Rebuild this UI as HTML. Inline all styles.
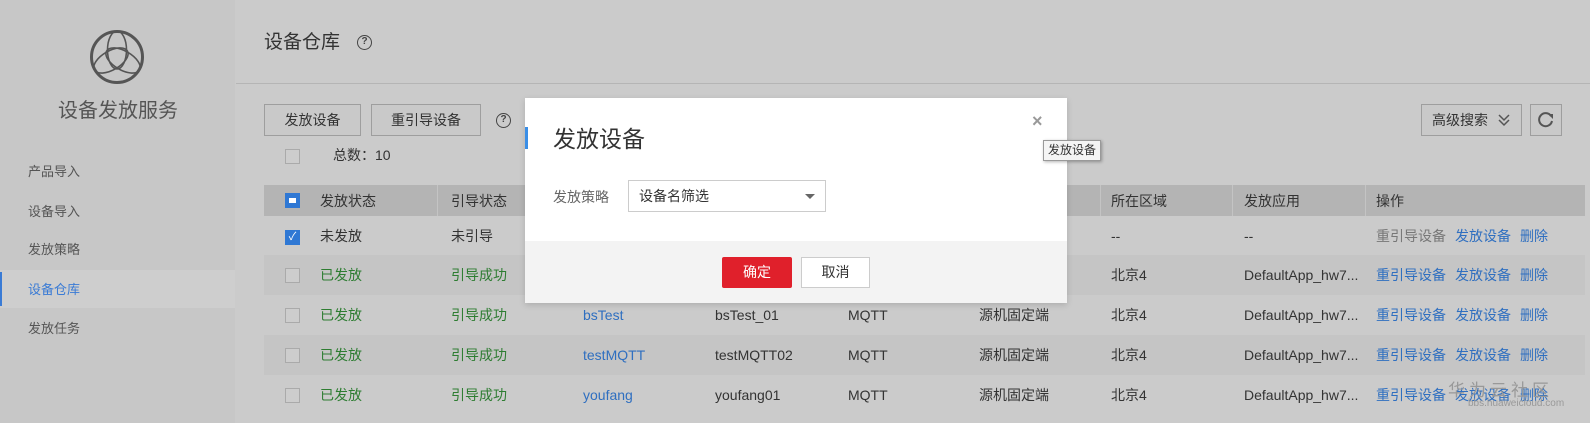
<!DOCTYPE html>
<html><head><meta charset="utf-8"><style>
*{margin:0;padding:0;box-sizing:border-box}
body{width:1590px;height:423px;overflow:hidden;background:#cbcbcb;font-family:"Liberation Sans","Noto Sans CJK SC",sans-serif;font-size:14px;color:#333;position:relative}
.abs{position:absolute}
.side{left:0;top:0;width:235px;height:423px;background:#c7c7c7}
.nav{left:28px;font-size:13px;color:#555;line-height:16px}
.btn{border:1px solid #9e9e9e;background:#c9c9c9;text-align:center;line-height:30px;font-size:14px;color:#333}
.cb{width:15px;height:15px;border:1px solid #aaa;background:#cdcdcd}
.row{left:264px;width:1321px;height:40px}
.t{position:absolute;font-size:14px;white-space:nowrap;line-height:16px}
.g{color:#2e7d32}.b{color:#2f6fc0}.gr{color:#777}
</style></head><body>
<div class="abs side"></div>
<svg class="abs" style="left:88px;top:28px" width="60" height="60" viewBox="88 28 60 60">
<g fill="none" stroke="#555" stroke-width="1.6">
<circle cx="117" cy="57" r="25.5" stroke-width="3"/>
<ellipse cx="117" cy="50" rx="9.5" ry="19"/>
<ellipse cx="117" cy="50" rx="9.5" ry="19" transform="rotate(120 117 57)"/>
<ellipse cx="117" cy="50" rx="9.5" ry="19" transform="rotate(240 117 57)"/>
</g></svg>
<div class="abs" style="left:58px;top:94px;font-size:20px;color:#555">设备发放服务</div>
<div class="abs nav" style="top:164px">产品导入</div>
<div class="abs nav" style="top:204px">设备导入</div>
<div class="abs nav" style="top:242px">发放策略</div>
<div class="abs" style="left:0;top:270px;width:235px;height:38px;background:#cecece"></div>
<div class="abs" style="left:0;top:272px;width:2px;height:34px;background:#3a7bd5"></div>
<div class="abs nav" style="top:282px;color:#3a7bd5">设备仓库</div>
<div class="abs nav" style="top:321px">发放任务</div>

<div class="abs" style="left:264px;top:31px;font-size:19px;color:#333;line-height:24px">设备仓库</div>
<div class="abs" style="left:357px;top:35px;width:15px;height:15px;border:1.5px solid #444;border-radius:50%;font-size:10px;line-height:12px;text-align:center;font-weight:bold;color:#444">?</div>
<div class="abs" style="left:236px;top:83px;width:1354px;height:1px;background:#b5b5b5"></div>

<div class="abs btn" style="left:264px;top:104px;width:97px;height:32px">发放设备</div>
<div class="abs btn" style="left:371px;top:104px;width:110px;height:32px">重引导设备</div>
<div class="abs" style="left:496px;top:113px;width:15px;height:15px;border:1.5px solid #444;border-radius:50%;font-size:10px;line-height:12px;text-align:center;font-weight:bold;color:#444">?</div>
<div class="abs btn" style="left:1421px;top:104px;width:101px;height:32px;text-align:left;padding-left:10px">高级搜索</div>
<svg class="abs" style="left:1497px;top:112px" width="14" height="16"><path d="M2 3 L7 8 L12 3 M2 8 L7 13 L12 8" fill="none" stroke="#555" stroke-width="1.5"/></svg>
<div class="abs btn" style="left:1530px;top:104px;width:32px;height:32px"></div>
<svg class="abs" style="left:1537px;top:111px" width="18" height="18" viewBox="0 0 18 18"><path d="M14 5 A6.5 6.5 0 1 0 15 10" fill="none" stroke="#555" stroke-width="2"/><path d="M11 3 L16 3 L16 8 Z" fill="#555"/></svg>
<div class="abs cb" style="left:285px;top:149px"></div>
<div class="abs" style="left:333px;top:147px;line-height:16px">总数：10</div>

<div class="abs" style="left:264px;top:185px;width:1321px;height:31px;background:#b4b4b4"></div>
<div class="abs" style="left:285px;top:193px;width:15px;height:15px;background:#2f78d4"><div style="margin:5px 4px;width:7px;height:5px;background:#fff"></div></div>
<div class="t" style="left:320px;top:193px">发放状态</div>
<div class="t" style="left:451px;top:193px">引导状态</div>
<div class="t" style="left:1111px;top:193px">所在区域</div>
<div class="t" style="left:1244px;top:193px">发放应用</div>
<div class="t" style="left:1376px;top:193px">操作</div>
<div class="abs" style="left:437px;top:185px;width:1px;height:31px;background:#c4c4c4"></div>
<div class="abs" style="left:1100px;top:185px;width:1px;height:31px;background:#c4c4c4"></div>
<div class="abs" style="left:1232px;top:185px;width:1px;height:31px;background:#c4c4c4"></div>
<div class="abs" style="left:1365px;top:185px;width:1px;height:31px;background:#c4c4c4"></div>

<div class="abs row" style="top:216px;background:#cbcbcb">
<div style="position:absolute;left:21px;top:14px;width:15px;height:15px;background:#2f78d4;color:#fff;font-size:11px;line-height:15px;text-align:center">&#10003;</div>
<div class="t" style="left:56px;top:12px">未发放</div><div class="t" style="left:187px;top:12px">未引导</div>
<div class="t" style="left:847px;top:12px">--</div><div class="t" style="left:980px;top:12px">--</div>
<div class="t gr" style="left:1112px;top:12px">重引导设备</div><div class="t b" style="left:1191px;top:12px">发放设备</div><div class="t b" style="left:1256px;top:12px">删除</div>
</div>
<div class="abs row" style="top:255px;background:#c5c5c5">
<div class="cb" style="position:absolute;left:21px;top:13px"></div>
<div class="t g" style="left:56px;top:12px">已发放</div><div class="t g" style="left:187px;top:12px">引导成功</div>
<div class="t" style="left:847px;top:12px">北京4</div><div class="t" style="left:980px;top:12px">DefaultApp_hw7...</div>
<div class="t b" style="left:1112px;top:12px">重引导设备</div><div class="t b" style="left:1191px;top:12px">发放设备</div><div class="t b" style="left:1256px;top:12px">删除</div>
</div>
<div class="abs row" style="top:295px;background:#cbcbcb">
<div class="cb" style="position:absolute;left:21px;top:13px"></div>
<div class="t g" style="left:56px;top:12px">已发放</div><div class="t g" style="left:187px;top:12px">引导成功</div>
<div class="t b" style="left:319px;top:12px">bsTest</div><div class="t" style="left:451px;top:12px">bsTest_01</div><div class="t" style="left:584px;top:12px">MQTT</div><div class="t" style="left:715px;top:12px">源机固定端</div>
<div class="t" style="left:847px;top:12px">北京4</div><div class="t" style="left:980px;top:12px">DefaultApp_hw7...</div>
<div class="t b" style="left:1112px;top:12px">重引导设备</div><div class="t b" style="left:1191px;top:12px">发放设备</div><div class="t b" style="left:1256px;top:12px">删除</div>
</div>
<div class="abs row" style="top:335px;background:#c5c5c5">
<div class="cb" style="position:absolute;left:21px;top:13px"></div>
<div class="t g" style="left:56px;top:12px">已发放</div><div class="t g" style="left:187px;top:12px">引导成功</div>
<div class="t b" style="left:319px;top:12px">testMQTT</div><div class="t" style="left:451px;top:12px">testMQTT02</div><div class="t" style="left:584px;top:12px">MQTT</div><div class="t" style="left:715px;top:12px">源机固定端</div>
<div class="t" style="left:847px;top:12px">北京4</div><div class="t" style="left:980px;top:12px">DefaultApp_hw7...</div>
<div class="t b" style="left:1112px;top:12px">重引导设备</div><div class="t b" style="left:1191px;top:12px">发放设备</div><div class="t b" style="left:1256px;top:12px">删除</div>
</div>
<div class="abs row" style="top:375px;background:#cbcbcb">
<div class="cb" style="position:absolute;left:21px;top:13px"></div>
<div class="t g" style="left:56px;top:12px">已发放</div><div class="t g" style="left:187px;top:12px">引导成功</div>
<div class="t b" style="left:319px;top:12px">youfang</div><div class="t" style="left:451px;top:12px">youfang01</div><div class="t" style="left:584px;top:12px">MQTT</div><div class="t" style="left:715px;top:12px">源机固定端</div>
<div class="t" style="left:847px;top:12px">北京4</div><div class="t" style="left:980px;top:12px">DefaultApp_hw7...</div>
<div class="t b" style="left:1112px;top:12px">重引导设备</div><div class="t b" style="left:1191px;top:12px">发放设备</div><div class="t b" style="left:1256px;top:12px">删除</div>
</div>
<div class="abs" style="left:1448px;top:376px;font-size:17px;color:#999;letter-spacing:4px">华为云社区</div>
<div class="abs" style="left:1468px;top:398px;font-size:10px;color:#999">bbs.huaweicloud.com</div>

<div class="abs" style="left:525px;top:98px;width:542px;height:205px;background:#fff;box-shadow:0 2px 6px rgba(0,0,0,.15)">
<div class="abs" style="left:0;top:29px;width:3px;height:22px;background:#3a8ee6"></div>
<div class="abs" style="left:28px;top:27px;font-size:23px;color:#333;line-height:28px">发放设备</div>
<div class="abs" style="left:507px;top:13px;font-size:18px;color:#999;font-weight:bold">×</div>
<div class="abs" style="left:28px;top:91px;color:#666;line-height:16px">发放策略</div>
<div class="abs" style="left:103px;top:82px;width:198px;height:32px;border:1px solid #ccc;padding-left:10px;line-height:30px">设备名筛选<span style="position:absolute;right:10px;top:13px;border:5px solid transparent;border-top:5px solid #666;border-bottom:0"></span></div>
<div class="abs" style="left:0;top:143px;width:542px;height:62px;background:#f3f3f3">
<div class="abs" style="left:197px;top:16px;width:70px;height:31px;background:#e0202b;color:#fff;text-align:center;line-height:31px;border-radius:2px">确定</div>
<div class="abs" style="left:276px;top:16px;width:69px;height:31px;background:#fff;border:1px solid #ccc;text-align:center;line-height:29px">取消</div>
</div>
</div>
<div class="abs" style="left:1043px;top:140px;width:58px;height:21px;background:#f4f4f4;border:1px solid #999;box-shadow:1px 1px 3px rgba(0,0,0,.3);font-size:12px;line-height:19px;text-align:center;color:#333">发放设备</div>
</body></html>
